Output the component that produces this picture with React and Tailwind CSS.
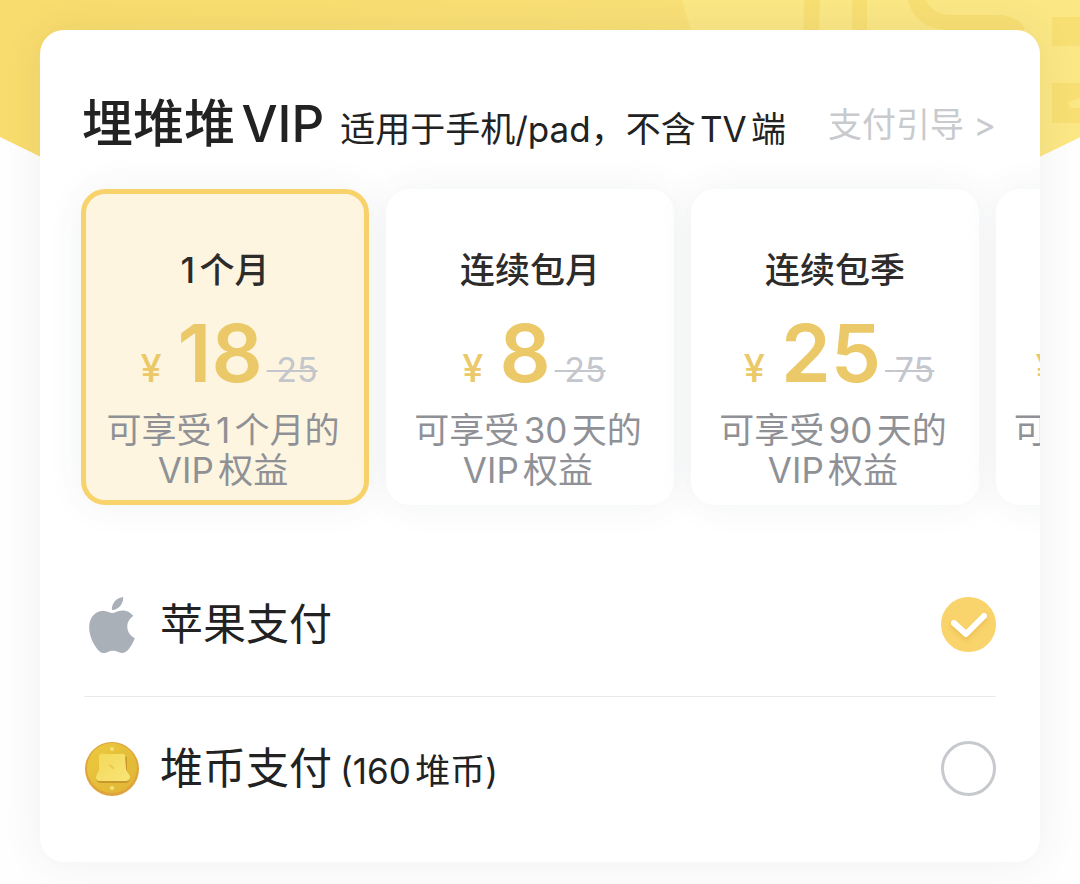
import { useState } from "react";
import { SiApple } from "react-icons/si";

const plans = [
  { id: "month", title: "1个月", price: "18", old: "25", desc: "可享受1个月的" },
  { id: "auto-month", title: "连续包月", price: "8", old: "25", desc: "可享受30天的" },
  { id: "auto-quarter", title: "连续包季", price: "25", old: "75", desc: "可享受90天的" },
  { id: "auto-year", title: "连续包年", price: "88", old: "300", desc: "可享受365天的" },
];

function Backdrop() {
  return (
    <svg
      aria-hidden="true"
      className="absolute inset-x-0 top-0 -z-10 h-[400px] w-full"
      viewBox="0 0 1080 400"
      preserveAspectRatio="none"
    >
      <defs>
        <linearGradient id="glow" x1="0" x2="1" y1="0" y2="0">
          <stop offset="0" stopColor="#f8dc6d" />
          <stop offset="1" stopColor="#f9e27c" />
        </linearGradient>
        <clipPath id="flag">
          <path d="M0 0H1080V137L540 400L0 137Z" />
        </clipPath>
      </defs>
      <g clipPath="url(#flag)">
        <rect width="1080" height="400" fill="url(#glow)" />
        <path d="M682 0H1080V400H800Z" fill="#fbe784" />
        <g fill="#f8df73">
          <path d="M804 0h16l-2 60h-15zM852 0h15v60h-15z" />
          <path d="M908 0h18c6 12 14 15 28 15h44c14 0 22 6 26 12v3h-78c-24-2-34-14-38-30z" />
          <path d="M1052 17h28v29h-28zM1052 83h28v15l-12 4 2 6h10v15h-28z" />
        </g>
      </g>
    </svg>
  );
}

function Coin() {
  return (
    <svg viewBox="0 0 56 56" className="size-14" aria-hidden="true">
      <defs>
        <linearGradient id="coin" x1="0" x2="1" y1="0" y2="1">
          <stop offset="0" stopColor="#ecca3e" />
          <stop offset="1" stopColor="#e0b336" />
        </linearGradient>
        <linearGradient id="bag" x1="0" x2="1" y1="0" y2="1">
          <stop offset="0" stopColor="#f3d95a" />
          <stop offset="1" stopColor="#f9e476" />
        </linearGradient>
      </defs>
      <circle cx="28" cy="28" r="27" fill="#dfa43c" />
      <circle cx="28" cy="27" r="25" fill="url(#coin)" />
      <path
        d="M18 15h22c2 0 3 1 3 3v11c0 3 3 4 3 8 0 3-2 5-5 5H17c-3 0-5-2-5-5 0-4 3-5 3-8V18c0-2 1-3 3-3z"
        fill="#c8982c"
      />
      <path
        d="M17 13c2-1 3 0 5 0h13c2 0 4-1 6 1l1 14c1 4 4 5 4 8s-2 4-5 4H16c-3 0-4-1-4-4s3-5 3-8V15c0-1 1-2 2-2z"
        fill="url(#bag)"
      />
      <path d="M26 24l3 3" fill="none" stroke="#e9ca4c" strokeWidth="2" strokeLinecap="round" />
      <circle cx="28" cy="8" r="2" fill="#f6e07a" />
      <circle cx="28" cy="47" r="2" fill="#f6e07a" />
    </svg>
  );
}

function PlanCard({ plan, checked, onSelect }) {
  return (
    <label
      className={`relative flex h-[316px] w-72 shrink-0 cursor-pointer flex-col items-center rounded-3xl border-[5px] pt-[51px] text-center ${
        checked ? "border-[#f8d36c] bg-[#fdf5e0]" : "border-white bg-white"
      } shadow-[0_0_36px_rgba(60,70,80,0.07)]`}
    >
      <input
        type="radio"
        name="plan"
        value={plan.id}
        checked={checked}
        onChange={onSelect}
        className="sr-only"
      />
      <span className="text-[35px] leading-[50px] font-medium text-[#2e2b2b]">{plan.title}</span>
      <span className="mt-5 ml-2 flex items-baseline leading-[76px] whitespace-pre">
        <span className="mr-4 text-[38px] font-medium text-[#ebc968]">¥</span>
        <span className="mr-1 text-[80px] font-semibold text-[#ebc968]">{plan.price}</span>
        <del className="text-[34px] text-[#c3c6cd] decoration-2"> {plan.old}</del>
      </span>
      <span className="mt-0.5 mr-1 text-[35px] leading-10 text-[#8f9196]">
        {plan.desc}
        <br />
        VIP权益
      </span>
    </label>
  );
}

function PayRow({ icon, name, note, value, checked, onSelect }) {
  return (
    <label className="flex h-[143px] cursor-pointer items-center">
      <span className="flex w-14 justify-center">{icon}</span>
      <span className="ml-5 text-[43px] text-[#222]">
        {name}
        {note && <span className="ml-2 text-[35px]">{note}</span>}
      </span>
      <span className="ml-auto grid size-[55px] place-items-center">
        <input
          type="radio"
          name="payment"
          value={value}
          checked={checked}
          onChange={onSelect}
          className="col-start-1 row-start-1 size-full cursor-pointer appearance-none rounded-full border-[3px] border-[#c6c9cd] checked:border-[#f9d36b] checked:bg-[#f9d36b]"
        />
        {checked && (
          <svg
            viewBox="0 0 55 55"
            aria-hidden="true"
            className="pointer-events-none col-start-1 row-start-1 size-full drop-shadow-[0_3px_2px_rgba(200,140,20,0.25)]"
          >
            <path d="M13 26L25 37L43 19" fill="none" stroke="#fff" strokeWidth="6" strokeLinecap="round" strokeLinejoin="round" />
          </svg>
        )}
      </span>
    </label>
  );
}

export default function App() {
  const [plan, setPlan] = useState("month");
  const [payment, setPayment] = useState("apple");

  return (
    <div className="relative isolate min-h-screen bg-[#fefefe] px-10 pt-[30px] pb-[22px] font-['Inter','Noto_Sans_CJK_SC',sans-serif] [text-autospace:normal]">
      <Backdrop />
      <main className="overflow-hidden rounded-3xl bg-white pb-[22px] shadow-[0_0_40px_rgba(60,70,80,0.08)]">
        <header className="flex items-center pt-[60px] pr-11 pl-[42px] whitespace-nowrap">
          <div className="flex items-baseline">
            <h1 className="text-[51px] leading-[68px] font-medium text-[#222]">埋堆堆VIP</h1>
            <p className="ml-4 text-[35px] text-[#222]">适用于手机/pad，不含TV端</p>
          </div>
          <a href="#guide" className="ml-auto text-[34px] text-[#c8cacd]">
            支付引导 &gt;
          </a>
        </header>

        <section
          aria-label="套餐"
          className="flex gap-[17px] overflow-x-auto px-[41px] pt-[31px] pb-12 [scrollbar-width:none]"
        >
          {plans.map((p) => (
            <PlanCard key={p.id} plan={p} checked={plan === p.id} onSelect={() => setPlan(p.id)} />
          ))}
        </section>

        <section aria-label="支付方式" className="px-11">
          <PayRow
            icon={<SiApple className="size-14 text-[#a9b0b7]" />}
            name="苹果支付"
            value="apple"
            checked={payment === "apple"}
            onSelect={() => setPayment("apple")}
          />
          <hr className="border-[#e9eaec]" />
          <PayRow
            icon={<Coin />}
            name="堆币支付"
            note="(160堆币)"
            value="coin"
            checked={payment === "coin"}
            onSelect={() => setPayment("coin")}
          />
        </section>
      </main>
    </div>
  );
}
